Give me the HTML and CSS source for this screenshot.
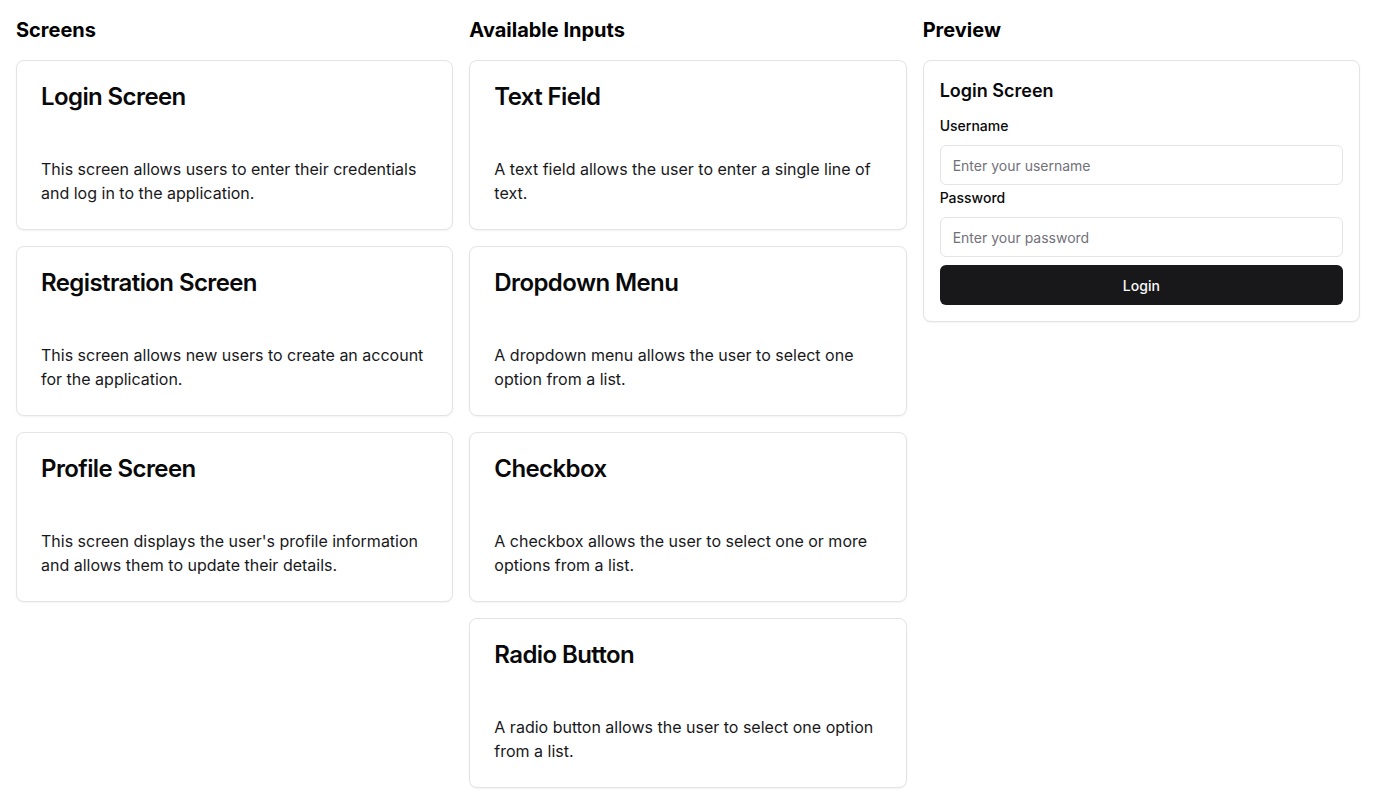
FILE: index.html
```html
<!DOCTYPE html>
<html lang="en">
<head>
<meta charset="utf-8">
<title>Screen Builder</title>
<link rel="stylesheet" href="styles.css">
</head>
<body>
<div class="page">
  <section class="column">
    <h2 class="col-heading">Screens</h2>
    <div class="stack">
      <div class="card">
        <h3 class="card-title">Login Screen</h3>
        <p class="card-text">This screen allows users to enter their credentials and log in to the application.</p>
      </div>
      <div class="card">
        <h3 class="card-title">Registration Screen</h3>
        <p class="card-text">This screen allows new users to create an account for the application.</p>
      </div>
      <div class="card">
        <h3 class="card-title">Profile Screen</h3>
        <p class="card-text">This screen displays the user's profile information and allows them to update their details.</p>
      </div>
    </div>
  </section>
  <section class="column">
    <h2 class="col-heading">Available Inputs</h2>
    <div class="stack">
      <div class="card">
        <h3 class="card-title">Text Field</h3>
        <p class="card-text">A text field allows the user to enter a single line of text.</p>
      </div>
      <div class="card">
        <h3 class="card-title">Dropdown Menu</h3>
        <p class="card-text">A dropdown menu allows the user to select one option from a list.</p>
      </div>
      <div class="card">
        <h3 class="card-title">Checkbox</h3>
        <p class="card-text">A checkbox allows the user to select one or more options from a list.</p>
      </div>
      <div class="card">
        <h3 class="card-title">Radio Button</h3>
        <p class="card-text">A radio button allows the user to select one option from a list.</p>
      </div>
    </div>
  </section>
  <section class="column">
    <h2 class="col-heading">Preview</h2>
    <div class="preview">
      <h3 class="preview-title">Login Screen</h3>
      <form class="form">
        <label class="label" for="username">Username</label>
        <input class="input" id="username" type="text" placeholder="Enter your username">
        <label class="label label-2" for="password">Password</label>
        <input class="input" id="password" type="password" placeholder="Enter your password">
        <button class="button" type="button">Login</button>
      </form>
    </div>
  </section>
</div>
</body>
</html>
```

FILE: styles.css
```css
* {
  box-sizing: border-box;
}

html, body {
  margin: 0;
  padding: 0;
  background: #ffffff;
}

body {
  font-family: Inter, "Noto Sans", "Liberation Sans", sans-serif;
  color: #09090b;
}

.page {
  display: grid;
  grid-template-columns: repeat(3, 1fr);
  gap: 16px;
  padding: 16px;
}

.col-heading {
  margin: 0 0 16px;
  font-size: 20px;
  line-height: 28px;
  font-weight: 700;
  color: #000;
}

.stack {
  display: flex;
  flex-direction: column;
  gap: 16px;
}

.card {
  border: 1px solid #e4e4e7;
  border-radius: 8px;
  background: #fff;
  box-shadow: 0 1px 2px rgba(0, 0, 0, 0.05);
  padding: 24px;
}

.card-title {
  margin: 0 0 48px;
  font-size: 24px;
  line-height: 24px;
  font-weight: 600;
  letter-spacing: -0.025em;
  color: #09090b;
}

.card-text {
  margin: 0;
  font-size: 16px;
  line-height: 24px;
  color: #18181b;
}

.preview {
  border: 1px solid #e4e4e7;
  border-radius: 8px;
  background: #fff;
  box-shadow: 0 1px 2px rgba(0, 0, 0, 0.05);
  padding: 16px;
}

.preview-title {
  margin: 0 0 11px;
  font-size: 18px;
  line-height: 28px;
  font-weight: 600;
  color: #09090b;
}

.form {
  display: flex;
  flex-direction: column;
}

.label {
  font-size: 14px;
  line-height: 20px;
  font-weight: 500;
  color: #09090b;
  margin-bottom: 9px;
}

.label-2 {
  margin-top: 3px;
}

.input {
  height: 40px;
  border: 1px solid #e4e4e7;
  border-radius: 6px;
  padding: 0 12px;
  font-family: inherit;
  font-size: 14px;
  color: #09090b;
  background: #fff;
  outline: none;
}

.input::placeholder {
  color: #71717a;
}

.button {
  margin-top: 8px;
  height: 40px;
  border: none;
  border-radius: 6px;
  background: #18181b;
  color: #fafafa;
  font-family: inherit;
  font-size: 14px;
  font-weight: 500;
  cursor: pointer;
}
```
